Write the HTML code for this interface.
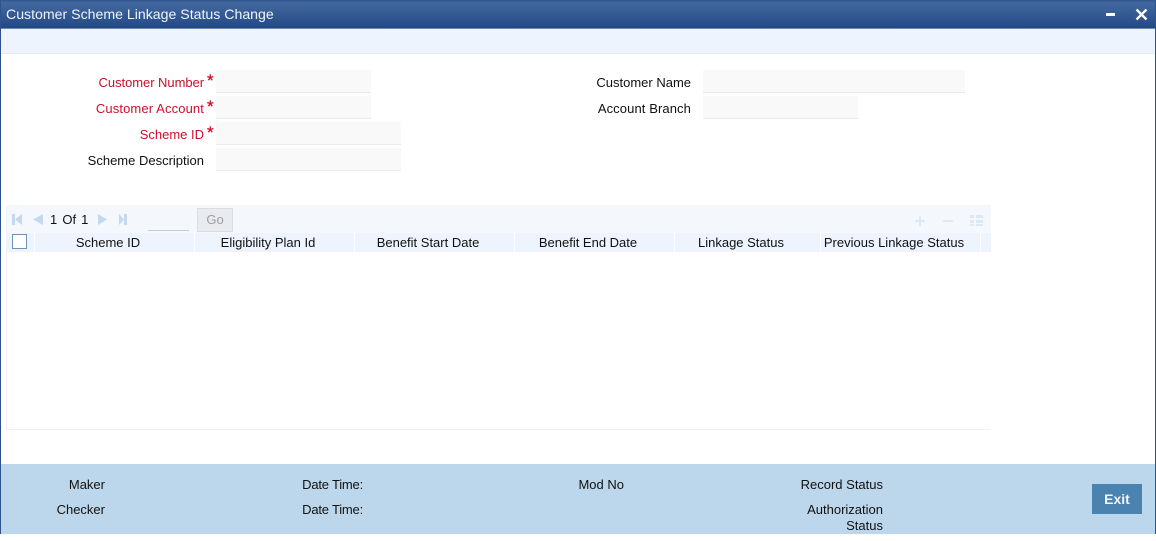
<!DOCTYPE html>
<html><head><meta charset="utf-8"><style>
html,body{margin:0;padding:0;background:#fff}
#p{position:relative;width:1156px;height:541px;overflow:hidden;background:#fff;font-family:"Liberation Sans",Arial,sans-serif;font-size:13px;color:#111}
#p div{position:absolute;white-space:nowrap}
.r{text-align:right;line-height:16px;height:16px;margin-top:1px}
.c{text-align:center;line-height:16px;height:16px;margin-top:1px}
.red{color:#c8112b}
.st{color:#d0102a;font-size:17px;line-height:16px;height:16px;-webkit-text-stroke:.3px #d0102a}
.i{background:#f9f9f9;border-bottom:1px solid #e9ecef}
.sep{background:#fbfdff;width:1px;top:233px;height:19px}
svg{position:absolute}
</style></head><body><div id="p">
<div style="left:0;top:0;width:1156px;height:28px;background:linear-gradient(#31558f 0,#42689f 3px,#3a6098 10px,#234a86 27px)"></div>
<div style="left:0;top:28px;width:1156px;height:1px;background:#6d8bb2"></div>
<div style="left:6px;top:6px;font-size:14.13px;line-height:16px;color:#f0f4fa">Customer Scheme Linkage Status Change</div>
<div style="left:1106px;top:13px;width:9px;height:3px;background:#fff"></div>
<svg style="left:1135px;top:8px" width="13" height="13" viewBox="0 0 13 13"><path d="M1.5 1.5L11.5 11.5M11.5 1.5L1.5 11.5" stroke="#fff" stroke-width="2.3" fill="none"/></svg>
<div style="left:0;top:29px;width:1156px;height:24px;background:#edf4fd"></div>
<div style="left:0;top:53px;width:1156px;height:1px;background:#e6e9ee"></div>

<div class="r red" style="left:60px;width:144px;top:74px;letter-spacing:-.05px">Customer Number</div><div class="st" style="left:207px;top:73px">*</div>
<div class="i" style="left:216px;top:70px;width:155px;height:22px"></div>
<div class="r red" style="left:60px;width:144px;top:100px;letter-spacing:.12px">Customer Account</div><div class="st" style="left:207px;top:99px">*</div>
<div class="i" style="left:216px;top:96px;width:155px;height:22px"></div>
<div class="r red" style="left:60px;width:144px;top:126px">Scheme ID</div><div class="st" style="left:207px;top:125px">*</div>
<div class="i" style="left:216px;top:122px;width:185px;height:22px"></div>
<div class="r" style="left:60px;width:144px;top:152px">Scheme Description</div>
<div class="i" style="left:216px;top:148px;width:185px;height:22px"></div>
<div class="r" style="left:540px;width:151px;top:74px">Customer Name</div>
<div class="i" style="left:703px;top:70px;width:262px;height:22px"></div>
<div class="r" style="left:540px;width:151px;top:100px;letter-spacing:.1px">Account Branch</div>
<div class="i" style="left:703px;top:96px;width:155px;height:22px"></div>

<div style="left:6px;top:205px;width:985px;height:28px;background:#f4f8fd"></div>
<div style="left:6px;top:233px;width:985px;height:19px;background:#edf4fd"></div>
<div style="left:6px;top:252px;width:985px;height:177px;background:#fff"></div>
<div style="left:6px;top:205px;width:1px;height:225px;background:#f0f1f3"></div>
<div style="left:6px;top:429px;width:985px;height:1px;background:#f0f1f3"></div>

<svg style="left:10px;top:212px" width="124" height="14" viewBox="0 0 124 14" fill="#c5d9ee"><path d="M2 2h3v11H2zM12 2v11L5 7.5zM33 2v11L23 7.5z"/><path d="M88 2v11l9-5.5zM109 2l5 5.5-5 5.5zM114 2h3v11h-3z"/></svg>
<div style="left:50px;top:212px;line-height:16px;font-size:13px;word-spacing:1.5px">1 Of 1</div>
<div style="left:148px;top:230px;width:41px;height:1px;background:#c9ccd1"></div>
<div style="left:197px;top:208px;width:34px;height:22px;border:1px solid #d9dce0;background:#e9ebee;color:#9a9da1;text-align:center;line-height:22px;font-size:13px">Go</div>
<svg style="left:912px;top:213px" width="72" height="16" viewBox="0 0 72 16" fill="#dce8f4"><path d="M7 3h2v4h4v2H9v4H7V9H3V7h4zM31 7h10v2H31zM58 2h4v3h-4zM64 2h7v3h-7zM58 7h4v3h-4zM64 7h7v3h-7zM58 11h4v2h-4zM64 11h7v2h-7z"/></svg>

<div style="left:12px;top:234px;width:13px;height:13px;border:1px solid #6d93b5;background:#fff"></div>
<div class="sep" style="left:34px"></div><div class="sep" style="left:194px"></div><div class="sep" style="left:354px"></div><div class="sep" style="left:514px"></div><div class="sep" style="left:674px"></div><div class="sep" style="left:820px"></div><div class="sep" style="left:980px"></div>
<div class="c" style="left:34px;width:148px;top:234px">Scheme ID</div>
<div class="c" style="left:194px;width:148px;top:234px">Eligibility Plan Id</div>
<div class="c" style="left:354px;width:148px;top:234px">Benefit Start Date</div>
<div class="c" style="left:514px;width:148px;top:234px">Benefit End Date</div>
<div class="c" style="left:674px;width:134px;top:234px">Linkage Status</div>
<div class="c" style="left:820px;width:148px;top:234px">Previous Linkage Status</div>

<div style="left:0;top:464px;width:1156px;height:70px;background:#bcd7ec"></div>
<div class="r" style="left:20px;width:85px;top:476px">Maker</div>
<div class="r" style="left:20px;width:85px;top:501px">Checker</div>
<div class="r" style="left:263px;width:100px;top:476px;letter-spacing:-.2px">Date Time:</div>
<div class="r" style="left:263px;width:100px;top:501px;letter-spacing:-.2px">Date Time:</div>
<div class="r" style="left:524px;width:100px;top:476px">Mod No</div>
<div class="r" style="left:783px;width:100px;top:476px">Record Status</div>
<div class="r" style="left:783px;width:100px;top:501px">Authorization</div>
<div class="r" style="left:783px;width:100px;top:517px">Status</div>
<div style="left:1092px;top:484px;width:50px;height:30px;background:#4a82b0;color:#f2f6fa;text-align:center;line-height:30px;font-size:14px;font-weight:bold">Exit</div>

<div style="left:0;top:0;width:1px;height:534px;background:#2e528e"></div>
<div style="left:1155px;top:0;width:1px;height:534px;background:#2e528e"></div>
</div></body></html>
